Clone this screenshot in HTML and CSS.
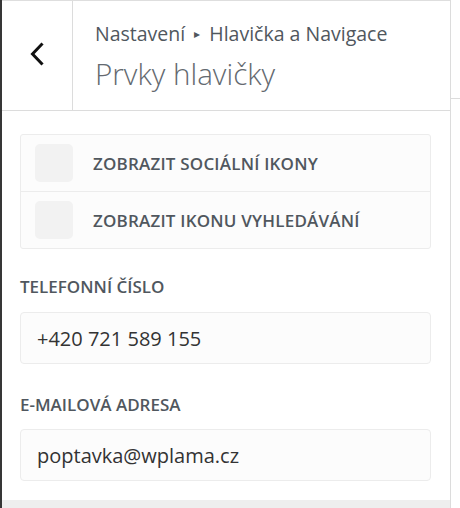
FILE: index.html
```html
<!DOCTYPE html>
<html lang="cs">
<head>
<meta charset="utf-8">
<title>Prvky hlavičky</title>
<link rel="stylesheet" href="styles.css">
</head>
<body>
<div class="frame">
  <div class="panel">
    <header class="head">
      <button class="back" aria-label="Zpět">
        <svg width="70" height="109" viewBox="0 0 70 109"><path d="M39.5 43.5 L30.5 53 L39.5 62.5" fill="none" stroke="#111" stroke-width="3" stroke-linecap="square"/></svg>
      </button>
      <div class="titles">
        <div class="crumb">Nastavení <span class="arrow">▸</span> Hlavička a Navigace</div>
        <h1 class="title">Prvky hlavičky</h1>
      </div>
    </header>
    <div class="body">
      <div class="card">
        <label class="row"><span class="box"></span><span class="row-text">ZOBRAZIT SOCIÁLNÍ IKONY</span></label>
        <label class="row"><span class="box"></span><span class="row-text">ZOBRAZIT IKONU VYHLEDÁVÁNÍ</span></label>
      </div>
      <div class="field first">
        <div class="label">TELEFONNÍ ČÍSLO</div>
        <div class="input">+420 721 589 155</div>
      </div>
      <div class="field">
        <div class="label">E-MAILOVÁ ADRESA</div>
        <div class="input">poptavka@wplama.cz</div>
      </div>
    </div>
    <div class="foot"></div>
  </div>
  <div class="side"><div class="side-line"></div></div>
</div>
</body>
</html>
```
FILE: styles.css
```css
* { box-sizing: border-box; }
html, body { margin: 0; padding: 0; background: #fff; }
body { font-family: "Open Sans", "Noto Sans", sans-serif; }

.frame {
  display: flex;
  height: 508px;
  border-left: 2px solid #363636;
  overflow: hidden;
}
.panel {
  width: 449px;
  border-right: 1px solid #dcdcdc;
  display: flex;
  flex-direction: column;
}
.side { flex: 1; }
.side-line { height: 99px; border-bottom: 1px solid #dcdcdc; }

.head {
  display: flex;
  height: 111px;
  border-top: 1px solid #dedede;
  border-bottom: 1px solid #dcdcdc;
}
.back {
  width: 71px;
  padding: 0;
  margin: 0;
  border: 0;
  border-right: 1px solid #dcdcdc;
  background: #fff;
  display: block;
}
.back svg { display: block; }
.titles {
  padding: 19px 0 0 22px;
}
.crumb {
  font-size: 19.5px;
  line-height: 28px;
  color: #50575e;
  white-space: nowrap;
}
.arrow { font-size: 12px; vertical-align: 3px; padding: 0 4px; }
.title {
  margin: 6px 0 0;
  font-size: 29.6px;
  line-height: 40px;
  font-weight: 300;
  color: #646970;
  white-space: nowrap;
}

.body {
  flex: 1;
  padding: 23px 19px 0 18px;
}
.card {
  border: 1px solid #ececec;
  border-radius: 3px;
  background: #fcfcfc;
}
.row {
  display: flex;
  align-items: center;
  padding: 9px 14px;
}
.row + .row { border-top: 1px solid #ececec; }
.box {
  width: 38px;
  height: 38px;
  border-radius: 5px;
  background: #f2f2f2;
  flex: none;
}
.row-text {
  margin-left: 20px;
  font-size: 17px;
  letter-spacing: 0.2px;
  font-weight: 600;
  color: #50575e;
  white-space: nowrap;
}

.field.first { margin-top: 28px; }
.field { margin-top: 31px; }
.label {
  font-size: 17px;
  line-height: 20px;
  font-weight: 600;
  color: #50575e;
}
.input {
  margin-top: 15px;
  height: 52px;
  border: 1px solid #ececec;
  border-radius: 4px;
  background: #fcfcfc;
  padding: 0 16px;
  display: flex;
  align-items: center;
  font-size: 20px;
  color: #333;
}
.field + .field .input { margin-top: 14px; }

.foot {
  height: 8px;
  background: #eeeeee;
}
```
